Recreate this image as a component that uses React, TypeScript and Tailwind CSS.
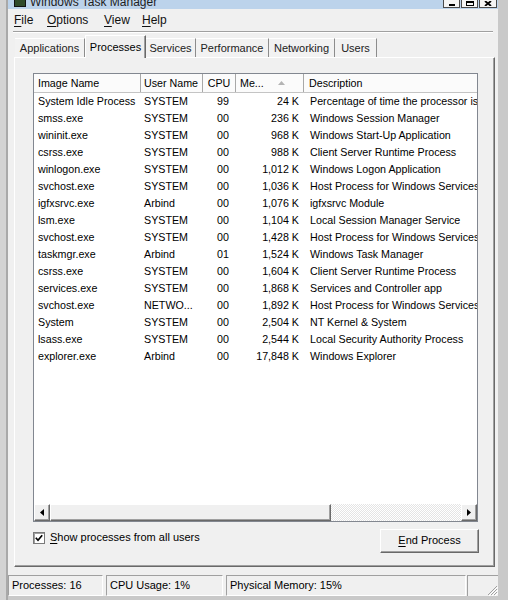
import React from 'react'

type Row = [string, string, string, string, string]

const ROWS: Row[] = [
  ['System Idle Process', 'SYSTEM', '99', '24 K', 'Percentage of time the processor is idle'],
  ['smss.exe', 'SYSTEM', '00', '236 K', 'Windows Session Manager'],
  ['wininit.exe', 'SYSTEM', '00', '968 K', 'Windows Start-Up Application'],
  ['csrss.exe', 'SYSTEM', '00', '988 K', 'Client Server Runtime Process'],
  ['winlogon.exe', 'SYSTEM', '00', '1,012 K', 'Windows Logon Application'],
  ['svchost.exe', 'SYSTEM', '00', '1,036 K', 'Host Process for Windows Services'],
  ['igfxsrvc.exe', 'Arbind', '00', '1,076 K', 'igfxsrvc Module'],
  ['lsm.exe', 'SYSTEM', '00', '1,104 K', 'Local Session Manager Service'],
  ['svchost.exe', 'SYSTEM', '00', '1,428 K', 'Host Process for Windows Services'],
  ['taskmgr.exe', 'Arbind', '01', '1,524 K', 'Windows Task Manager'],
  ['csrss.exe', 'SYSTEM', '00', '1,604 K', 'Client Server Runtime Process'],
  ['services.exe', 'SYSTEM', '00', '1,868 K', 'Services and Controller app'],
  ['svchost.exe', 'NETWO...', '00', '1,892 K', 'Host Process for Windows Services'],
  ['System', 'SYSTEM', '00', '2,504 K', 'NT Kernel & System'],
  ['lsass.exe', 'SYSTEM', '00', '2,544 K', 'Local Security Authority Process'],
  ['explorer.exe', 'Arbind', '00', '17,848 K', 'Windows Explorer'],
]

const TABS = [
  { label: 'Applications', w: 'w-[70px]' },
  { label: 'Processes', w: 'w-[61px]', active: true },
  { label: 'Services', w: 'w-[50px]' },
  { label: 'Performance', w: 'w-[73px]' },
  { label: 'Networking', w: 'w-[66px]' },
  { label: 'Users', w: 'w-[42px]' },
]

const cols = 'grid grid-cols-[107px_62px_33px_68px_230px] w-max'

function MenuItem({ first, rest, w }: { first: string; rest: string; w: string }) {
  return (
    <span className={w}>
      <span className="underline underline-offset-2">{first}</span>
      {rest}
    </span>
  )
}

function TitleButton({ children, w }: { children: React.ReactNode; w: string }) {
  return (
    <div className={`${w} h-[8px] bg-[#f4f4f4] border border-t-0 border-[#4a4a4a] flex items-end justify-center pb-[1px]`}>
      {children}
    </div>
  )
}

function Arrow({ dir }: { dir: 'left' | 'right' }) {
  return (
    <div className="w-[16px] h-full bg-[#f0f0f0] border-t border-l border-white border-r border-b border-r-[#696969] border-b-[#696969] shadow-[inset_-1px_-1px_0_#a0a0a0] flex items-center justify-center">
      <svg width="4" height="7" viewBox="0 0 4 7">
        {dir === 'left' ? <path d="M4 0 L0 3.5 L4 7 Z" fill="#000" /> : <path d="M0 0 L4 3.5 L0 7 Z" fill="#000" />}
      </svg>
    </div>
  )
}

export default function App() {
  return (
    <div className="w-[508px] h-[600px] overflow-hidden flex bg-[#c9c9c9] font-['Liberation_Sans',Arial,sans-serif] text-black select-none">
      {/* left frame */}
      <div className="w-[8px] h-full shrink-0 bg-[#d3d3d3] border-r-2 border-[#a9a9a9]" />

      <div className="w-[490px] h-[596px] shrink-0 flex flex-col bg-[#f0f0f0]">
        {/* title bar, mostly off screen */}
        <div className="h-[9px] shrink-0 overflow-hidden bg-[#bcd3eb] flex justify-between pl-[6px] pr-[1px]">
          <div className="flex items-start gap-[4px] -mt-[4px]">
            <div className="w-[12px] h-[11px] bg-[#2f4a2a] border border-[#111]" />
            <span className="text-[12px] leading-[12px] text-[#1e1e1e]">Windows Task Manager</span>
          </div>
          <div className="flex gap-[1px]">
            <TitleButton w="w-[17px]">
              <div className="w-[6px] h-[2px] bg-black" />
            </TitleButton>
            <TitleButton w="w-[17px]">
              <div className="w-[8px] h-[5px] border border-black border-t-2" />
            </TitleButton>
            <TitleButton w="w-[18px]">
              <svg width="8" height="5" viewBox="0 0 8 5">
                <path d="M1 0 L7 5 M7 0 L1 5" stroke="#000" strokeWidth="1.8" />
              </svg>
            </TitleButton>
          </div>
        </div>

        {/* menu bar */}
        <div className="h-[22px] shrink-0 flex items-center pl-[6px] text-[12px] text-[#111]">
          <MenuItem first="F" rest="ile" w="w-[33px]" />
          <MenuItem first="O" rest="ptions" w="w-[57px]" />
          <MenuItem first="V" rest="iew" w="w-[38px]" />
          <MenuItem first="H" rest="elp" w="w-[40px]" />
        </div>
        <div className="mx-[5px] shrink-0 border-t border-[#a0a0a0] border-b border-b-white" />

        {/* tabs + panel */}
        <div className="ml-[6px] mr-[3px] pt-[2px] flex flex-col">
          <div className="h-[22px] flex items-end pl-[1px] relative z-10">
            {TABS.map((t) =>
              t.active ? (
                <div
                  key={t.label}
                  className={`${t.w} h-[23px] -mb-[1px] bg-[#f0f0f0] border-t border-l border-white border-r border-r-[#696969] shadow-[inset_-1px_0_0_#a0a0a0] flex justify-center pt-[3px] text-[11px]`}
                >
                  {t.label}
                </div>
              ) : (
                <div
                  key={t.label}
                  className={`${t.w} h-[19px] bg-[#f2f2f2] border-t border-white border-r border-r-[#8c8c8c] flex items-center justify-center text-[11px] text-[#222]`}
                >
                  {t.label}
                </div>
              ),
            )}
          </div>

          <div className="h-[510px] border-t border-l border-white border-r border-b border-r-[#696969] border-b-[#696969] shadow-[inset_-1px_-1px_0_#a0a0a0] pt-[15px] pl-[18px] pr-[16px] flex flex-col">
            {/* list view */}
            <div className="w-[445px] h-[449px] border border-[#828790] bg-white flex flex-col">
              <div className="flex-1 overflow-hidden">
                <div className={`${cols} h-[19px] bg-[#fbfbfb] border-b border-[#c4c4c4] text-[10.7px] items-stretch`}>
                  <div className="border-r border-[#a8a8a8] pl-[4px] flex items-center">Image Name</div>
                  <div className="border-r border-[#a8a8a8] pl-[3px] flex items-center">User Name</div>
                  <div className="border-r border-[#a8a8a8] flex items-center justify-center">CPU</div>
                  <div className="border-r border-[#a8a8a8] pl-[4px] flex items-center gap-[14px]">
                    <span>Me...</span>
                    <svg width="7" height="4" viewBox="0 0 7 4">
                      <path d="M0 4 L3.5 0 L7 4 Z" fill="#b4b4b4" />
                    </svg>
                  </div>
                  <div className="pl-[5px] flex items-center">Description</div>
                </div>
                {ROWS.map((r, i) => (
                  <div key={i} className={`${cols} h-[17px] items-center text-[10.7px] whitespace-nowrap`}>
                    <div className="pl-[4px]">{r[0]}</div>
                    <div className="pl-[3px]">{r[1]}</div>
                    <div className="text-right pr-[7px]">{r[2]}</div>
                    <div className="text-right pr-[5px]">{r[3]}</div>
                    <div className="pl-[6px]">{r[4]}</div>
                  </div>
                ))}
              </div>
              {/* horizontal scrollbar */}
              <div className="h-[17px] shrink-0 flex">
                <Arrow dir="left" />
                <div className="w-[281px] h-full bg-[#f0f0f0] border-t border-l border-white border-r border-b border-r-[#696969] border-b-[#696969] shadow-[inset_-1px_-1px_0_#a0a0a0]" />
                <div className="flex-1 h-full bg-[repeating-conic-gradient(#ffffff_0_25%,#e4e4e4_0_50%)] bg-[length:2px_2px]" />
                <Arrow dir="right" />
              </div>
            </div>

            {/* bottom row */}
            <div className="mt-[7px] w-[446px] flex justify-between items-start">
              <div className="flex items-center gap-[5px] mt-[1px] text-[11px]">
                <div className="w-[12px] h-[12px] bg-white border border-[#7a7a7a] shadow-[inset_1px_1px_0_#a0a0a0] flex items-center justify-center">
                  <svg width="8" height="8" viewBox="0 0 8 8">
                    <path d="M0.8 3.8 L3 6.2 L7.2 1.2" stroke="#000" strokeWidth="1.7" fill="none" />
                  </svg>
                </div>
                <span className="-mt-[1px]">
                  <span className="underline underline-offset-2">S</span>how processes from all users
                </span>
              </div>
              <div className="w-[99px] h-[24px] bg-[#f0f0f0] border-t border-l border-white border-r border-b border-r-[#696969] border-b-[#696969] shadow-[inset_-1px_-1px_0_#a0a0a0] flex items-center justify-center text-[11px] pb-[1px]">
                <span>
                  <span className="underline underline-offset-2">E</span>nd Process
                </span>
              </div>
            </div>
          </div>
        </div>

        {/* status bar */}
        <div className="mt-[8px] h-[21px] shrink-0 flex text-[11px] leading-none">
          <div className="w-[95px] h-full border-t border-l border-[#a0a0a0] border-b border-r border-b-white border-r-white pl-[3px] flex items-center">
            Processes: 16
          </div>
          <div className="w-[117px] ml-[3px] h-full border-t border-l border-[#a0a0a0] border-b border-r border-b-white border-r-white pl-[3px] flex items-center">
            CPU Usage: 1%
          </div>
          <div className="w-[240px] ml-[3px] h-full border-t border-l border-[#a0a0a0] border-b border-r border-b-white border-r-white pl-[3px] flex items-center">
            Physical Memory: 15%
          </div>
          <div className="flex-1 ml-[1px] h-full border-t border-l border-[#a0a0a0] flex items-end justify-end">
            <svg width="12" height="12" viewBox="0 0 12 12">
              <path d="M11 2 L2 11 M11 5 L5 11 M11 8 L8 11" stroke="#a0a0a0" strokeWidth="1" />
              <path d="M12 3 L3 12 M12 6 L6 12 M12 9 L9 12" stroke="#ffffff" strokeWidth="1" />
            </svg>
          </div>
        </div>
      </div>
    </div>
  )
}
